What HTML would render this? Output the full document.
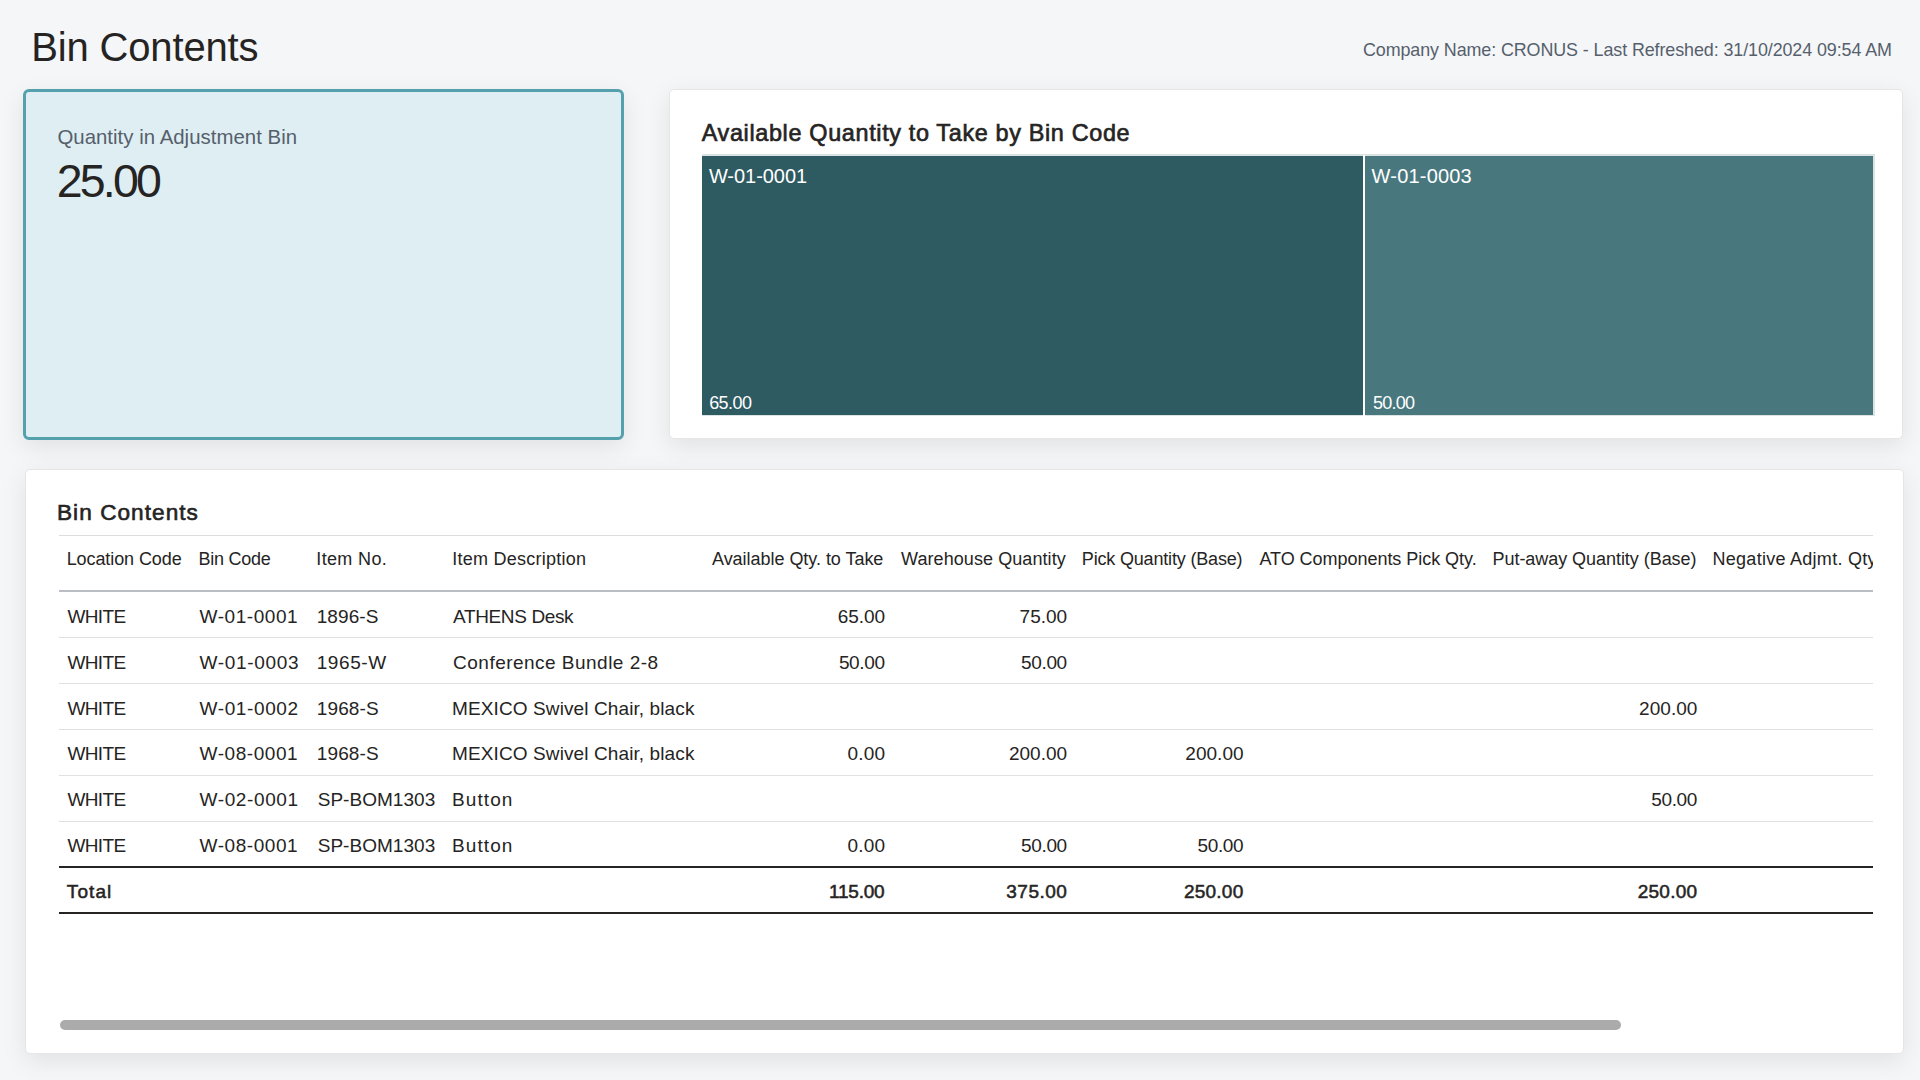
<!DOCTYPE html><html><head><meta charset="utf-8"><style>
html,body{margin:0;padding:0;width:1920px;height:1080px;overflow:hidden;background:#F5F6F8;}
body{position:relative;font-family:"Liberation Sans",sans-serif;}
.t{position:absolute;white-space:nowrap;}
</style></head><body>
<div style="position:absolute;left:23px;top:89px;width:601px;height:351px;box-sizing:border-box;background:#DFEEF3;border:3px solid #55A0AD;border-radius:6px;box-shadow:0 7px 24px rgba(0,0,0,0.085);"></div>
<div style="position:absolute;left:669px;top:89px;width:1234px;height:350px;box-sizing:border-box;background:#FFFFFF;border:1px solid #E6E6E6;border-radius:5px;box-shadow:0 7px 24px rgba(0,0,0,0.085);"></div>
<div style="position:absolute;left:25px;top:469px;width:1879px;height:585px;box-sizing:border-box;background:#FFFFFF;border:1px solid #E6E6E6;border-radius:5px;box-shadow:0 7px 24px rgba(0,0,0,0.085);"></div>
<div style="position:absolute;left:702px;top:154px;width:1173px;height:262px;background:#DCE3E4;"></div>
<div style="position:absolute;left:702px;top:156px;width:661px;height:259px;background:#2E5A61;"></div>
<div style="position:absolute;left:1365px;top:156px;width:508px;height:259px;background:#48787E;"></div>
<div style="position:absolute;left:1363px;top:155px;width:2px;height:261px;background:#FFFFFF;"></div>
<div class="t" style="left:31.20px;top:26.74px;font-size:40px;line-height:40px;font-weight:400;color:#252423;letter-spacing:-0.148px">Bin Contents</div>
<div class="t" style="left:1363.00px;top:41.85px;font-size:17.9px;line-height:17.9px;font-weight:400;color:#56606C;letter-spacing:-0.089px">Company Name: CRONUS - Last Refreshed: 31/10/2024 09:54 AM</div>
<div class="t" style="left:57.40px;top:127.13px;font-size:20.4px;line-height:20.4px;font-weight:400;color:#56606C;letter-spacing:0.019px">Quantity in Adjustment Bin</div>
<div class="t" style="left:56.80px;top:157.54px;font-size:46.5px;line-height:46.5px;font-weight:400;color:#252423;letter-spacing:-2.826px">25.00</div>
<div class="t" style="left:701.70px;top:122.19px;font-size:23.4px;line-height:23.4px;font-weight:400;-webkit-text-stroke:0.66px #252423;color:#252423;letter-spacing:0.659px">Available Quantity to Take by Bin Code</div>
<div class="t" style="left:708.90px;top:166.27px;font-size:20px;line-height:20px;font-weight:400;color:#FFFFFF;letter-spacing:-0.044px">W-01-0001</div>
<div class="t" style="left:709.20px;top:393.56px;font-size:18px;line-height:18px;font-weight:400;color:#FFFFFF;letter-spacing:-0.583px">65.00</div>
<div class="t" style="left:1371.60px;top:166.27px;font-size:20px;line-height:20px;font-weight:400;color:#FFFFFF;letter-spacing:0.194px">W-01-0003</div>
<div class="t" style="left:1372.90px;top:393.56px;font-size:18px;line-height:18px;font-weight:400;color:#FFFFFF;letter-spacing:-0.758px">50.00</div>
<div class="t" style="left:57.00px;top:502.37px;font-size:22.6px;line-height:22.6px;font-weight:400;-webkit-text-stroke:0.63px #252423;color:#252423;letter-spacing:1.049px">Bin Contents</div>
<div style="position:absolute;left:0;top:0;width:1873px;height:1080px;overflow:hidden;">
<div style="position:absolute;left:59px;top:535px;width:1814px;height:1px;background:#DCDCDC;"></div>
<div style="position:absolute;left:59px;top:590px;width:1814px;height:2px;background:#BABEC4;"></div>
<div style="position:absolute;left:59px;top:637px;width:1814px;height:1px;background:#E1E1E1;"></div>
<div style="position:absolute;left:59px;top:683px;width:1814px;height:1px;background:#E1E1E1;"></div>
<div style="position:absolute;left:59px;top:729px;width:1814px;height:1px;background:#E1E1E1;"></div>
<div style="position:absolute;left:59px;top:775px;width:1814px;height:1px;background:#E1E1E1;"></div>
<div style="position:absolute;left:59px;top:821px;width:1814px;height:1px;background:#E1E1E1;"></div>
<div style="position:absolute;left:59px;top:866px;width:1814px;height:2px;background:#252423;"></div>
<div style="position:absolute;left:59px;top:912px;width:1814px;height:2px;background:#252423;"></div>
<div class="t" style="left:66.70px;top:550.16px;font-size:18px;line-height:18px;font-weight:400;color:#252423;letter-spacing:-0.090px">Location Code</div>
<div class="t" style="left:198.60px;top:550.16px;font-size:18px;line-height:18px;font-weight:400;color:#252423;letter-spacing:-0.262px">Bin Code</div>
<div class="t" style="left:316.30px;top:550.16px;font-size:18px;line-height:18px;font-weight:400;color:#252423;letter-spacing:0.355px">Item No.</div>
<div class="t" style="left:452.20px;top:550.16px;font-size:18px;line-height:18px;font-weight:400;color:#252423;letter-spacing:0.251px">Item Description</div>
<div class="t" style="left:712.00px;top:550.16px;font-size:18px;line-height:18px;font-weight:400;color:#252423;letter-spacing:-0.034px">Available Qty. to Take</div>
<div class="t" style="left:901.00px;top:550.16px;font-size:18px;line-height:18px;font-weight:400;color:#252423;letter-spacing:0.076px">Warehouse Quantity</div>
<div class="t" style="left:1081.80px;top:550.16px;font-size:18px;line-height:18px;font-weight:400;color:#252423;letter-spacing:-0.172px">Pick Quantity (Base)</div>
<div class="t" style="left:1259.40px;top:550.16px;font-size:18px;line-height:18px;font-weight:400;color:#252423;letter-spacing:-0.034px">ATO Components Pick Qty.</div>
<div class="t" style="left:1492.50px;top:550.16px;font-size:18px;line-height:18px;font-weight:400;color:#252423;letter-spacing:-0.047px">Put-away Quantity (Base)</div>
<div class="t" style="left:1712.50px;top:550.16px;font-size:18px;line-height:18px;font-weight:400;color:#252423;letter-spacing:0.275px">Negative Adjmt. Qty</div>
<div class="t" style="left:67.40px;top:606.92px;font-size:19px;line-height:19px;font-weight:400;color:#252423;letter-spacing:-0.635px">WHITE</div>
<div class="t" style="left:199.50px;top:606.92px;font-size:19px;line-height:19px;font-weight:400;color:#252423;letter-spacing:0.553px">W-01-0001</div>
<div class="t" style="left:316.70px;top:606.92px;font-size:19px;line-height:19px;font-weight:400;color:#252423;letter-spacing:0.081px">1896-S</div>
<div class="t" style="left:453.10px;top:606.92px;font-size:19px;line-height:19px;font-weight:400;color:#252423;letter-spacing:-0.372px">ATHENS Desk</div>
<div class="t" style="left:837.70px;top:606.92px;font-size:19px;line-height:19px;font-weight:400;color:#252423;letter-spacing:-0.070px">65.00</div>
<div class="t" style="left:1019.60px;top:606.92px;font-size:19px;line-height:19px;font-weight:400;color:#252423;letter-spacing:0.005px">75.00</div>
<div class="t" style="left:67.40px;top:652.72px;font-size:19px;line-height:19px;font-weight:400;color:#252423;letter-spacing:-0.635px">WHITE</div>
<div class="t" style="left:199.50px;top:652.72px;font-size:19px;line-height:19px;font-weight:400;color:#252423;letter-spacing:0.678px">W-01-0003</div>
<div class="t" style="left:316.70px;top:652.72px;font-size:19px;line-height:19px;font-weight:400;color:#252423;letter-spacing:0.581px">1965-W</div>
<div class="t" style="left:453.10px;top:652.72px;font-size:19px;line-height:19px;font-weight:400;color:#252423;letter-spacing:0.478px">Conference Bundle 2-8</div>
<div class="t" style="left:838.90px;top:652.72px;font-size:19px;line-height:19px;font-weight:400;color:#252423;letter-spacing:-0.370px">50.00</div>
<div class="t" style="left:1021.10px;top:652.72px;font-size:19px;line-height:19px;font-weight:400;color:#252423;letter-spacing:-0.370px">50.00</div>
<div class="t" style="left:67.40px;top:698.52px;font-size:19px;line-height:19px;font-weight:400;color:#252423;letter-spacing:-0.635px">WHITE</div>
<div class="t" style="left:199.50px;top:698.52px;font-size:19px;line-height:19px;font-weight:400;color:#252423;letter-spacing:0.615px">W-01-0002</div>
<div class="t" style="left:316.70px;top:698.52px;font-size:19px;line-height:19px;font-weight:400;color:#252423;letter-spacing:0.161px">1968-S</div>
<div class="t" style="left:452.10px;top:698.52px;font-size:19px;line-height:19px;font-weight:400;color:#252423;letter-spacing:0.105px">MEXICO Swivel Chair, black</div>
<div class="t" style="left:1639.10px;top:698.52px;font-size:19px;line-height:19px;font-weight:400;color:#252423;letter-spacing:0.031px">200.00</div>
<div class="t" style="left:67.40px;top:744.32px;font-size:19px;line-height:19px;font-weight:400;color:#252423;letter-spacing:-0.635px">WHITE</div>
<div class="t" style="left:199.50px;top:744.32px;font-size:19px;line-height:19px;font-weight:400;color:#252423;letter-spacing:0.553px">W-08-0001</div>
<div class="t" style="left:316.70px;top:744.32px;font-size:19px;line-height:19px;font-weight:400;color:#252423;letter-spacing:0.161px">1968-S</div>
<div class="t" style="left:452.10px;top:744.32px;font-size:19px;line-height:19px;font-weight:400;color:#252423;letter-spacing:0.105px">MEXICO Swivel Chair, black</div>
<div class="t" style="left:847.40px;top:744.32px;font-size:19px;line-height:19px;font-weight:400;color:#252423;letter-spacing:0.196px">0.00</div>
<div class="t" style="left:1008.90px;top:744.32px;font-size:19px;line-height:19px;font-weight:400;color:#252423;letter-spacing:0.031px">200.00</div>
<div class="t" style="left:1185.30px;top:744.32px;font-size:19px;line-height:19px;font-weight:400;color:#252423;letter-spacing:0.031px">200.00</div>
<div class="t" style="left:67.40px;top:790.12px;font-size:19px;line-height:19px;font-weight:400;color:#252423;letter-spacing:-0.635px">WHITE</div>
<div class="t" style="left:199.50px;top:790.12px;font-size:19px;line-height:19px;font-weight:400;color:#252423;letter-spacing:0.615px">W-02-0001</div>
<div class="t" style="left:317.70px;top:790.12px;font-size:19px;line-height:19px;font-weight:400;color:#252423;letter-spacing:0.039px">SP-BOM1303</div>
<div class="t" style="left:452.10px;top:790.12px;font-size:19px;line-height:19px;font-weight:400;color:#252423;letter-spacing:1.067px">Button</div>
<div class="t" style="left:1651.30px;top:790.12px;font-size:19px;line-height:19px;font-weight:400;color:#252423;letter-spacing:-0.370px">50.00</div>
<div class="t" style="left:67.40px;top:835.92px;font-size:19px;line-height:19px;font-weight:400;color:#252423;letter-spacing:-0.635px">WHITE</div>
<div class="t" style="left:199.50px;top:835.92px;font-size:19px;line-height:19px;font-weight:400;color:#252423;letter-spacing:0.553px">W-08-0001</div>
<div class="t" style="left:317.70px;top:835.92px;font-size:19px;line-height:19px;font-weight:400;color:#252423;letter-spacing:0.039px">SP-BOM1303</div>
<div class="t" style="left:452.10px;top:835.92px;font-size:19px;line-height:19px;font-weight:400;color:#252423;letter-spacing:1.067px">Button</div>
<div class="t" style="left:847.40px;top:835.92px;font-size:19px;line-height:19px;font-weight:400;color:#252423;letter-spacing:0.196px">0.00</div>
<div class="t" style="left:1021.10px;top:835.92px;font-size:19px;line-height:19px;font-weight:400;color:#252423;letter-spacing:-0.370px">50.00</div>
<div class="t" style="left:1197.50px;top:835.92px;font-size:19px;line-height:19px;font-weight:400;color:#252423;letter-spacing:-0.370px">50.00</div>
<div class="t" style="left:66.80px;top:881.92px;font-size:19px;line-height:19px;font-weight:400;-webkit-text-stroke:0.53px #252423;color:#252423;letter-spacing:1.097px">Total</div>
<div class="t" style="left:829.10px;top:881.92px;font-size:19px;line-height:19px;font-weight:400;-webkit-text-stroke:0.53px #252423;color:#252423;letter-spacing:-0.227px">115.00</div>
<div class="t" style="left:1006.30px;top:881.92px;font-size:19px;line-height:19px;font-weight:400;-webkit-text-stroke:0.53px #252423;color:#252423;letter-spacing:0.491px">375.00</div>
<div class="t" style="left:1183.90px;top:881.92px;font-size:19px;line-height:19px;font-weight:400;-webkit-text-stroke:0.53px #252423;color:#252423;letter-spacing:0.251px">250.00</div>
<div class="t" style="left:1637.70px;top:881.92px;font-size:19px;line-height:19px;font-weight:400;-webkit-text-stroke:0.53px #252423;color:#252423;letter-spacing:0.251px">250.00</div>
</div>
<div style="position:absolute;left:60px;top:1020px;width:1561px;height:10px;background:#ABABAB;border-radius:5px;"></div>
</body></html>
